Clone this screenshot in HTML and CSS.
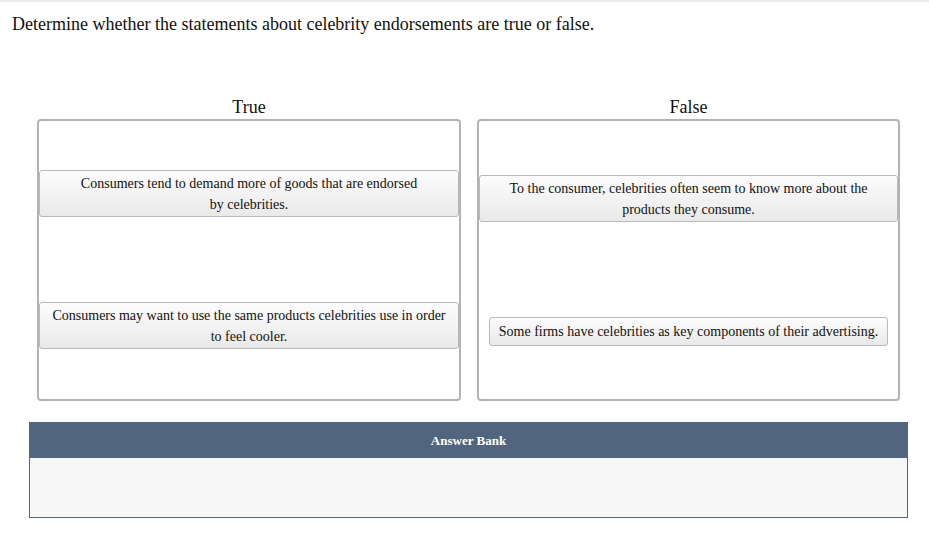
FILE: index.html
```html
<!DOCTYPE html>
<html lang="en">
<head>
<meta charset="utf-8">
<title>Celebrity endorsements</title>
<link rel="stylesheet" href="styles.css">
</head>
<body>
<div class="topbar"></div>
<p class="prompt">Determine whether the statements about celebrity endorsements are true or false.</p>
<div class="columns">
  <div class="column">
    <div class="label">True</div>
    <div class="zone zone-true">
      <div class="card card-t1">Consumers tend to demand more of goods that are endorsed by celebrities.</div>
      <div class="card card-t2">Consumers may want to use the same products celebrities use in order to feel cooler.</div>
    </div>
  </div>
  <div class="column">
    <div class="label">False</div>
    <div class="zone zone-false">
      <div class="card card-f1">To the consumer, celebrities often seem to know more about the products they consume.</div>
      <div class="card card-f2">Some firms have celebrities as key components of their advertising.</div>
    </div>
  </div>
</div>
<div class="bank">
  <div class="bank-head">Answer Bank</div>
  <div class="bank-body"></div>
</div>
</body>
</html>
```
FILE: styles.css
```css
* { box-sizing: border-box; }
html, body { margin: 0; padding: 0; background: #fff; }
body {
  font-family: "Liberation Serif", "Times New Roman", serif;
  color: #111;
  width: 929px;
}
.topbar { height: 2px; background: #ececec; }
.prompt {
  margin: 0;
  padding: 12px 12px 0 12px;
  font-size: 18px;
  line-height: 21px;
  height: 80px;
}
.columns {
  display: grid;
  grid-template-columns: 424px 423px;
  column-gap: 16px;
  margin-left: 37px;
}
.label {
  text-align: center;
  font-size: 18px;
  line-height: 20px;
  height: 37px;
  padding-top: 15px;
}
.zone {
  height: 282px;
  border: 2px solid #b3b3b3;
  border-radius: 4px;
  display: flex;
  flex-direction: column;
  align-items: center;
}
.card {
  max-width: 100%;
  border: 1px solid #b9b9b9;
  border-radius: 3px;
  background: linear-gradient(#fcfcfc, #e9e9e9);
  font-size: 14px;
  line-height: 21px;
  text-align: center;
  padding: 2px 10px 1px 10px;
}
.card-t1 { width: 100%; margin-top: 49px; padding-left: 36px; padding-right: 36px; }
.card-t2 { width: 100%; margin-top: 85px; }
.card-f1 { width: 100%; margin-top: 54px; padding-left: 24px; padding-right: 24px; }
.card-f2 { margin-top: 95px; padding: 3px 9px 3px 9px; }
.bank {
  margin: 21px 0 0 29px;
  width: 879px;
  border: 1px solid #51667e;
}
.bank-head {
  background: #51667e;
  color: #fff;
  font-weight: bold;
  font-size: 13px;
  height: 35px;
  line-height: 35px;
  text-align: center;
}
.bank-body {
  background: #f7f7f7;
  height: 59px;
}
```
